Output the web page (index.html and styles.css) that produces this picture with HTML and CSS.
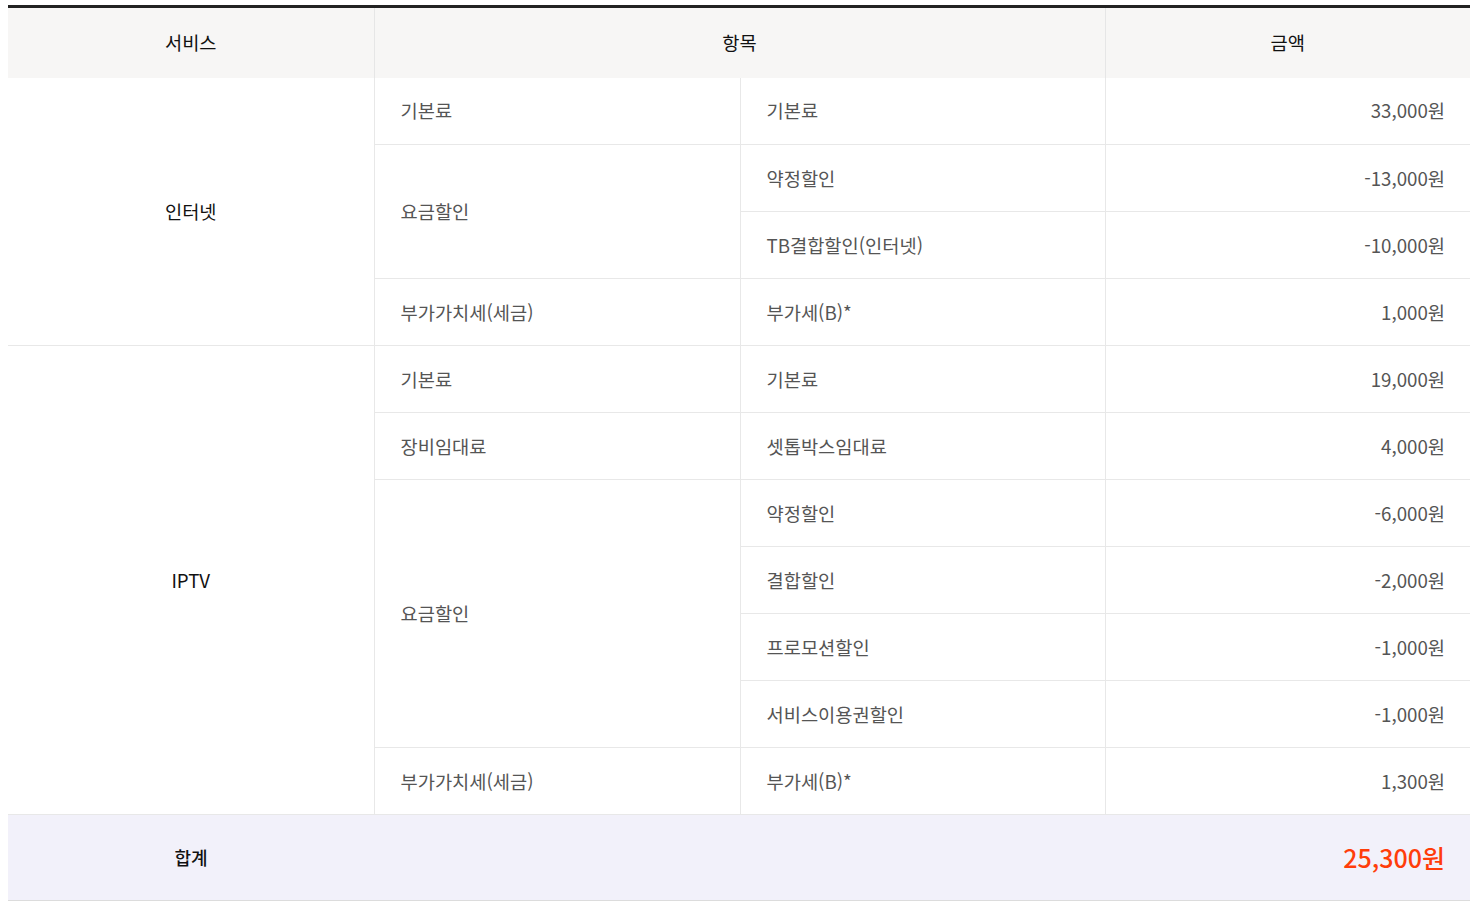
FILE: index.html
```html
<!DOCTYPE html>
<html lang="ko">
<head>
<meta charset="utf-8">
<title>요금 상세</title>
<link rel="stylesheet" href="styles.css">
</head>
<body>
<div class="wrap">
<table class="bill">
  <colgroup>
    <col class="col-a">
    <col class="col-b">
    <col class="col-c">
    <col class="col-d">
  </colgroup>
  <thead>
    <tr>
      <th class="c-svc">서비스</th>
      <th colspan="2" class="c-item">항목</th>
      <th class="c-amt">금액</th>
    </tr>
  </thead>
  <tbody>
    <tr>
      <td rowspan="4" class="svc">인터넷</td>
      <td class="item">기본료</td>
      <td class="item">기본료</td>
      <td class="amt">33,000원</td>
    </tr>
    <tr>
      <td rowspan="2" class="item">요금할인</td>
      <td class="item">약정할인</td>
      <td class="amt">-13,000원</td>
    </tr>
    <tr>
      <td class="item">TB결합할인(인터넷)</td>
      <td class="amt">-10,000원</td>
    </tr>
    <tr>
      <td class="item">부가가치세(세금)</td>
      <td class="item">부가세(B)*</td>
      <td class="amt">1,000원</td>
    </tr>
    <tr>
      <td rowspan="7" class="svc">IPTV</td>
      <td class="item">기본료</td>
      <td class="item">기본료</td>
      <td class="amt">19,000원</td>
    </tr>
    <tr>
      <td class="item">장비임대료</td>
      <td class="item">셋톱박스임대료</td>
      <td class="amt">4,000원</td>
    </tr>
    <tr>
      <td rowspan="4" class="item">요금할인</td>
      <td class="item">약정할인</td>
      <td class="amt">-6,000원</td>
    </tr>
    <tr>
      <td class="item">결합할인</td>
      <td class="amt">-2,000원</td>
    </tr>
    <tr>
      <td class="item">프로모션할인</td>
      <td class="amt">-1,000원</td>
    </tr>
    <tr>
      <td class="item">서비스이용권할인</td>
      <td class="amt">-1,000원</td>
    </tr>
    <tr>
      <td class="item">부가가치세(세금)</td>
      <td class="item">부가세(B)*</td>
      <td class="amt">1,300원</td>
    </tr>
  </tbody>
  <tfoot>
    <tr>
      <th class="total-label">합계</th>
      <td colspan="3" class="total-amt">25,300원</td>
    </tr>
  </tfoot>
</table>
</div>
</body>
</html>
```
FILE: styles.css
```css
html, body {
  margin: 0;
  padding: 0;
  background: #fff;
}

.wrap {
  padding: 5px 9px 0 8px;
}

.bill {
  width: 1462px;
  border-collapse: collapse;
  table-layout: fixed;
  border-top: 3px solid #222;
  font-family: "Noto Sans CJK KR", "Noto Sans", sans-serif;
  font-size: 18.7px;
}

.col-a { width: 366px; }
.col-b { width: 366px; }
.col-c { width: 365px; }
.col-d { width: 365px; }

.bill th,
.bill td {
  padding: 0 25px 2px 26px;
  box-sizing: border-box;
}

.bill thead th {
  height: 71px;
  background: #f7f6f5;
  color: #111;
  font-weight: 400;
  text-align: center;
  padding: 0 0 2px;
}

.bill thead .c-item,
.bill thead .c-amt {
  border-left: 1px solid #e6e6e6;
}

.bill tbody td {
  height: 67px;
  border-bottom: 1px solid #e8e8e8;
  color: #555;
  vertical-align: middle;
}

.bill tbody td.svc {
  text-align: center;
  color: #111;
  padding: 0 0 2px;
}

.bill tbody td.item,
.bill tbody td.amt {
  border-left: 1px solid #e8e8e8;
}

.bill tbody td.amt {
  text-align: right;
}

.bill tfoot th,
.bill tfoot td {
  height: 86px;
  background: #f2f1fa;
  border-top: 1px solid #dcdcdc;
  border-bottom: 1px solid #dcdcdc;
}

.bill tfoot .total-label {
  text-align: center;
  font-weight: 500;
  color: #111;
  padding: 0 0 2px;
  font-size: 18px;
}

.bill tfoot .total-amt {
  text-align: right;
  color: #ff3d0a;
  font-size: 25px;
  font-weight: 500;
}
```
